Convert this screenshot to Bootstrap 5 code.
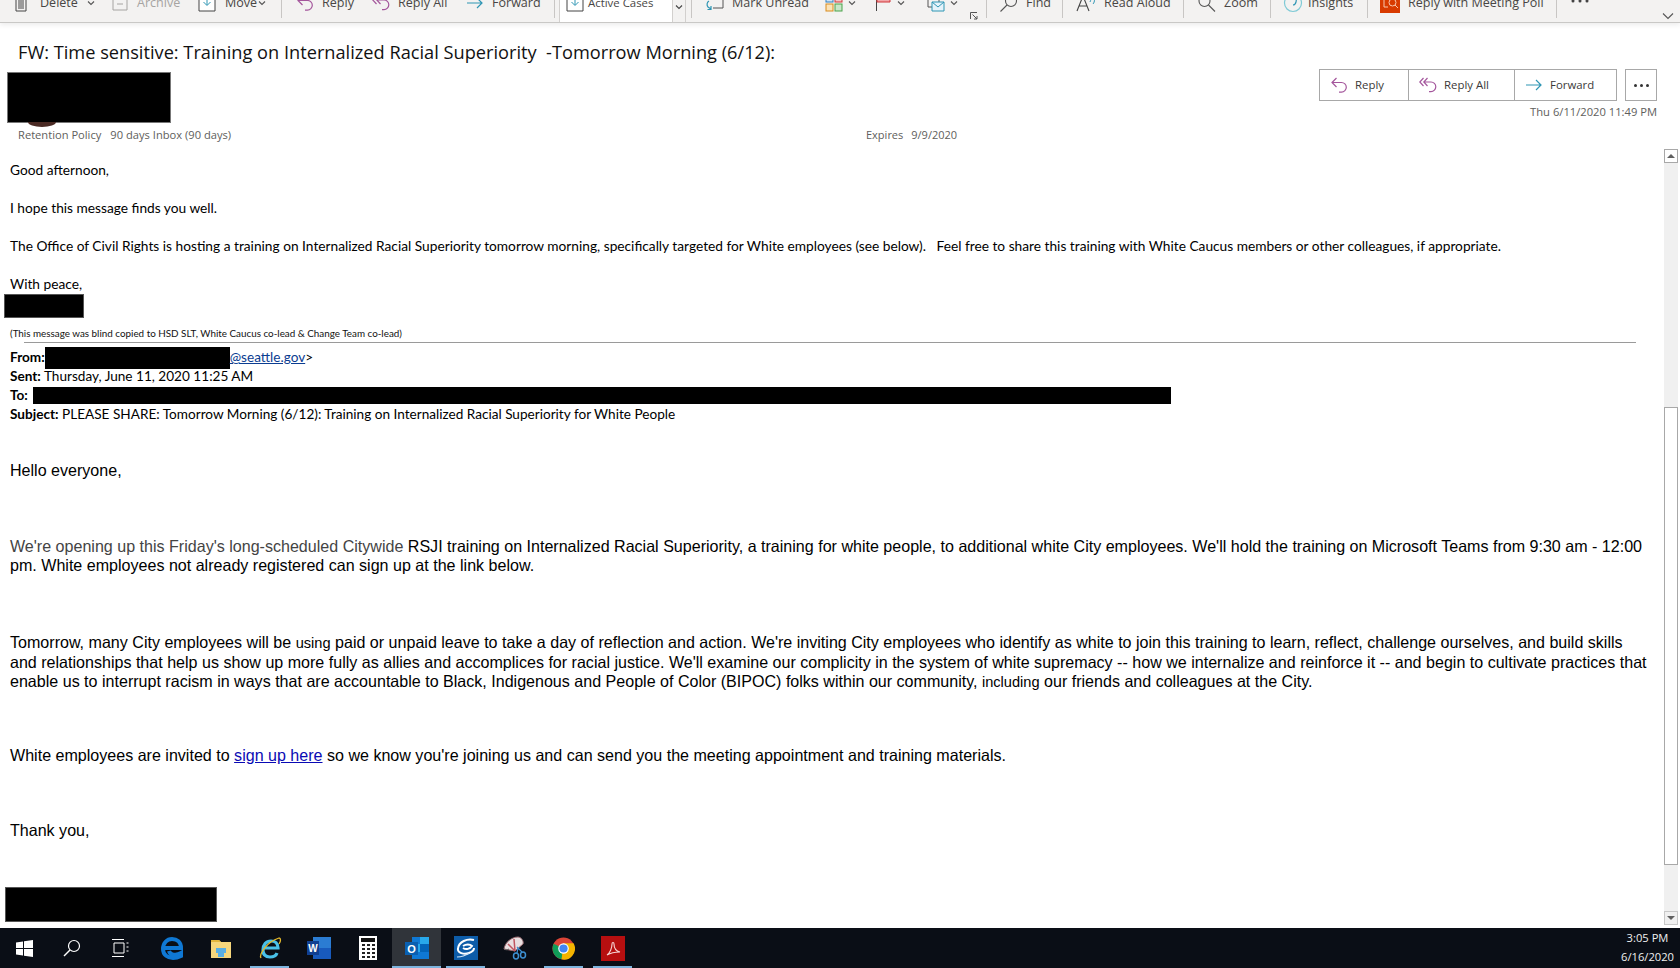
<!DOCTYPE html>
<html lang="en">
<head>
<meta charset="utf-8">
<title>Outlook message</title>
<link href="https://cdn.jsdelivr.net/npm/bootstrap@5.3.0/dist/css/bootstrap.min.css" rel="stylesheet">
<style>
html,body{height:968px;overflow:hidden;background:#fff;}
body{font-family:"Open Sans","Noto Sans",sans-serif;color:#000;}
.shell{height:968px;}
.ribbon{height:23px;background:#f3f2f1;border-bottom:1px solid #c9c8c6;box-shadow:0 2px 5px rgba(0,0,0,.08);overflow:hidden;flex:none;position:relative;z-index:2;}
.ribbon-row{display:grid;height:40px;margin-top:-17px;padding-left:13px;font-size:12.55px;color:#484644;
 grid-template-columns:99px 86px 83px 15px 76px 94px 88px 5px 132px 13px 121px 50px 52px 43px 16px 13px 63px 14px 107px 14px 73px 13px 84px 13px 176px 15px 91px 20px;}
.tool{display:flex;align-items:center;white-space:nowrap;gap:8px;}
.tool svg{flex:none;}
.gap-wide{gap:11px;}
.gap-mid{gap:9px;}
.gap-tight{gap:5px;}
.tool-off{color:#a6a4a2;}
.chev-a{margin-left:-2px;}
.chev-b{margin-left:-8px;}
.rule{width:1px;height:25px;background:#c8c6c4;align-self:start;margin-top:10px;}
.combo{display:flex;align-items:center;background:#fff;border:1px solid #d2d0ce;width:127px;height:40px;font-size:11.4px;padding-left:6px;gap:4px;}
.combo-arrow{margin-left:auto;width:13px;height:100%;background:#f3f2f1;border-left:1px solid #d2d0ce;display:flex;align-items:center;justify-content:center;padding-top:8px;}
.launcher{align-self:end;margin-bottom:3px;}
.head{flex:none;height:125px;}
.subject{font-size:18.22px;line-height:24px;padding:17px 0 0 18px;color:#111;white-space:pre;height:49px;}
.sender-row{height:55px;}
.who{width:164px;height:51px;margin-left:7px;background:#000;border:1px solid #777;position:relative;flex:none;}
.who::after{content:"";position:absolute;left:20px;top:49px;width:28px;height:5px;border-radius:0 0 50% 50%/0 0 100% 100%;background:#4a2a24;}
.acts{margin:-3px 23px 0 0;}
.act-group{display:flex;height:32px;border:1px solid #a8a8a8;font-size:11.4px;color:#3b3a39;}
.act{display:flex;align-items:center;gap:7px;padding-left:10px;border-right:1px solid #a8a8a8;}
.act:last-child{border-right:0;}
.act-a{width:89px;}
.act-b{width:106px;}
.act-c{width:101px;}
.act-more{width:32px;height:32px;border:1px solid #a8a8a8;margin-left:8px;display:flex;align-items:center;justify-content:center;gap:3px;}
.dotty{width:3px;height:3px;background:#333;border-radius:50%;}
.stamp{font-size:11.2px;color:#605e5c;text-align:right;line-height:16px;margin-top:3px;}
.meta{font-size:11px;color:#605e5c;line-height:16px;padding-left:18px;position:relative;white-space:nowrap;}
.meta-left{font-size:11.15px;}
.meta-gap{margin-left:9px;}
.meta-exp{position:absolute;left:866px;top:0;white-space:nowrap;}
.pane{flex:1 1 auto;min-height:0;overflow:hidden;}
.mail{flex:1 1 auto;min-width:0;padding:0 0 0 10px;font-family:Lato,"Open Sans",sans-serif;font-size:13.73px;line-height:19px;color:#000;}
.note{height:19px;}
.first{margin-top:12px;}
.spacer{height:19px;}
.black{background:#000;display:block;}
.bar-sign{width:80px;height:24px;margin:1px 0 0 -6px;border:1px solid #555;}
.tiny{font-size:9.85px;line-height:13px;margin-top:9px;color:#111;}
.divline{height:1px;background:#9a9a9a;margin:2px 14px 0 14px;width:1612px;}
.from-rows{margin-top:5px;font-size:13.6px;}
.from-row{height:19px;white-space:nowrap;display:flex;align-items:center;}
.from-row b{font-weight:700;}
.hide-a{width:185px;height:22px;}
.hide-b{width:1138px;height:17px;margin-left:5px;}
.mlink{color:#0b3d91;}
.sp-pre{white-space:pre;}
.arial{font-family:"Liberation Sans",Arial,sans-serif;font-size:16.07px;line-height:19px;width:1640px;}
.sect-a{margin-top:37px;}
.sect-b{margin-top:57px;}
.sect-c{margin-top:58px;}
.sect-d{margin-top:54px;}
.sect-e{margin-top:56px;}
.grey-run{color:#444;}
.shrink{font-size:14.6px;}
.signup{color:#0a0ab4;}
.bar-end{width:212px;height:35px;margin:47px 0 0 -5px;border:1px solid #555;}
.scroller{width:14px;flex:none;margin:1px 2px 3px 0;background:#f0f0f0;display:flex;flex-direction:column;}
.sc-btn{height:14px;flex:none;border:1px solid #a8a8a8;display:flex;align-items:center;justify-content:center;background:#fff;}
.sc-btn-low{border-color:#c8c8c8;background:#f0f0f0;}
.sc-thumb{height:458px;margin-top:244px;background:#fff;border:1px solid #a8a8a8;flex:none;}
.sc-fill{flex:1 1 auto;}
.tri-up{width:0;height:0;border-left:4px solid transparent;border-right:4px solid transparent;border-bottom:4px solid #606060;}
.tri-down{width:0;height:0;border-left:4px solid transparent;border-right:4px solid transparent;border-top:4px solid #606060;}
.taskbar{height:40px;background:#0a0e16;flex:none;color:#e8e8e8;}
.slot{width:48px;height:40px;display:flex;align-items:center;justify-content:center;position:relative;flex:none;}
.slot-app{width:49px;}
.slot-first{margin-left:3px;}
.slot-on::after{content:"";position:absolute;left:5px;right:5px;bottom:0;height:2px;background:#7db4de;}
.slot-focus{background:#30343a;}
.slot-focus::after{left:0;right:0;}
.clock{margin-left:auto;text-align:center;font-size:11.2px;line-height:19px;padding-right:6px;color:#f0f0f0;}
</style>
</head>
<body>
<svg width="0" height="0" class="d-block" aria-hidden="true">
 <defs>
  <symbol id="i-reply" viewBox="0 0 18 18"><path d="M6.5 2 2 6.5 6.5 11M2 6.5h9.5a4.8 4.8 0 0 1 0 9.6H9" fill="none" stroke="currentColor" stroke-width="1.2"/></symbol>
  <symbol id="i-replyall" viewBox="0 0 18 18"><path d="M4.5 2 .8 6l3.7 4M8.5 2 4.8 6l3.7 4M4.8 6h7.2a4.8 4.8 0 0 1 0 9.6h-2" fill="none" stroke="currentColor" stroke-width="1.2"/></symbol>
  <symbol id="i-forward" viewBox="0 0 18 18"><path d="M1 9h15M11 4l5 5-5 5" fill="none" stroke="currentColor" stroke-width="1.2"/></symbol>
  <symbol id="i-chev" viewBox="0 0 8 8"><path d="M1 2.5 4 5.5 7 2.5" fill="none" stroke="currentColor" stroke-width="1.1"/></symbol>
 </defs>
</svg>
<div class="shell d-flex flex-column">
 <div class="ribbon">
  <div class="ribbon-row">
   <div class="tool gap-wide"><svg width="16" height="18" viewBox="0 0 16 18"><path d="M1 4h14M3 4v13h10V4M6 6v9M8 6v9M10 6v9" fill="none" stroke="#444" stroke-width="1"/></svg>Delete<svg class="chev-a" width="8" height="8" color="#555"><use href="#i-chev"/></svg></div>
   <div class="tool tool-off gap-mid"><svg width="16" height="16" viewBox="0 0 16 16"><path d="M1 3h14v12H1zM5 9h6" fill="none" stroke="#a6a4a2"/></svg>Archive</div>
   <div class="tool gap-mid"><svg width="18" height="18" viewBox="0 0 18 18"><path d="M1 2h16v15H1z" fill="#fff" stroke="#444"/><path d="M9 2v9M5.500 8 9 11.500 12.500 8" fill="none" stroke="#2f96b4"/></svg><span>Move</span><svg class="chev-b" width="8" height="8" color="#555"><use href="#i-chev"/></svg></div>
   <div class="rule"></div>
   <div class="tool"><svg width="18" height="18" color="#a4569c"><use href="#i-reply"/></svg>Reply</div>
   <div class="tool"><svg width="18" height="18" color="#a4569c"><use href="#i-replyall"/></svg>Reply All</div>
   <div class="tool"><svg width="18" height="18" color="#2f96b4"><use href="#i-forward"/></svg>Forward</div>
   <div class="rule"></div>
   <div class="combo"><svg width="18" height="18" viewBox="0 0 18 18"><path d="M1 2h16v15H1z" fill="#fff" stroke="#444"/><path d="M9 2v9M5.500 8 9 11.500 12.500 8" fill="none" stroke="#2f96b4"/></svg>Active Cases<div class="combo-arrow"><svg width="8" height="8" color="#444"><use href="#i-chev"/></svg></div></div>
   <div class="rule"></div>
   <div class="tool"><svg width="20" height="20" viewBox="0 0 20 20"><path d="M8 4h11v11H9" fill="none" stroke="#555"/><path d="M5 8a4 4 0 0 0-1 6l3 2M7 13v3.500H3.500" fill="none" stroke="#2f96b4" stroke-width="1.200"/></svg>Mark Unread</div>
   <div class="tool gap-tight"><svg width="18" height="18" viewBox="0 0 18 18"><rect x="1" y="10" width="7" height="7" fill="#fbe3b8" stroke="#d98c1f"/><rect x="10" y="10" width="7" height="7" fill="#c9e6c9" stroke="#4ba34b"/><rect x="1" y="1" width="7" height="7" fill="#cfe4f7" stroke="#2f7fc1"/><rect x="10" y="1" width="7" height="7" fill="#f6c6c6" stroke="#d13438"/></svg><svg width="8" height="8" color="#555"><use href="#i-chev"/></svg></div>
   <div class="tool gap-tight"><svg width="17" height="18" viewBox="0 0 17 18"><path d="M1.500 2v15" stroke="#444" fill="none"/><path d="M2 1h13v7H2z" fill="#f1a7a9" stroke="#d13438"/></svg><svg width="8" height="8" color="#555"><use href="#i-chev"/></svg></div>
   <div class="tool gap-tight"><svg width="18" height="18" viewBox="0 0 18 18"><path d="M1 1h11v12H1z" fill="none" stroke="#555"/><path d="M5 8h12v9H5z" fill="#e5f3fa" stroke="#2f96b4"/><path d="M5 8l6 5 6-5" fill="none" stroke="#2f96b4"/></svg><svg width="8" height="8" color="#555"><use href="#i-chev"/></svg></div>
   <div class="tool launcher"><svg width="8" height="8" viewBox="0 0 8 8"><path d="M.5 7V.5H7M2.500 2.500 7 7M7 4v3H4" fill="none" stroke="#555"/></svg></div>
   <div class="rule"></div>
   <div class="tool"><svg width="19" height="19" viewBox="0 0 19 19"><circle cx="12" cy="7" r="5.500" fill="none" stroke="#555" stroke-width="1.100"/><path d="M8 11 1.500 17.500" stroke="#555" stroke-width="1.100"/></svg>Find</div>
   <div class="rule"></div>
   <div class="tool"><svg width="20" height="19" viewBox="0 0 20 19"><path d="M1 17 7 2l6 15M3.500 12h7" fill="none" stroke="#444" stroke-width="1.100"/><path d="M14 3c1 1 1 3 0 5M17 1c2 2 2 7 0 9" fill="none" stroke="#2f96b4"/></svg>Read Aloud</div>
   <div class="rule"></div>
   <div class="tool"><svg width="19" height="19" viewBox="0 0 19 19"><circle cx="7.500" cy="7" r="5.500" fill="none" stroke="#555" stroke-width="1.100"/><path d="M11.500 11 18 17.500" stroke="#555" stroke-width="1.100"/></svg>Zoom</div>
   <div class="rule"></div>
   <div class="tool gap-tight"><svg width="20" height="20" viewBox="0 0 20 20"><circle cx="10" cy="10" r="8.500" fill="none" stroke="#7fcad6" stroke-width="1.200"/><path d="M8 3c4-1 6 2 5 6-.5 2-2 3-3 3" fill="none" stroke="#2f96b4" stroke-width="1.200"/></svg>Insights</div>
   <div class="rule"></div>
   <div class="tool"><svg width="20" height="20" viewBox="0 0 20 20"><rect width="20" height="20" fill="#d83b01"/><path d="M4 5v9h4" fill="none" stroke="#f7c7ad"/><circle cx="12.500" cy="9.500" r="3.500" fill="none" stroke="#f7c7ad"/><path d="M15 12l3 3" stroke="#f7c7ad"/></svg>Reply with Meeting Poll</div>
   <div class="rule"></div>
   <div class="tool"><svg width="18" height="4" viewBox="0 0 18 4" class="mb-1"><circle cx="2" cy="2" r="1.500" fill="#444"/><circle cx="9" cy="2" r="1.500" fill="#444"/><circle cx="16" cy="2" r="1.500" fill="#444"/></svg></div>
   <div class="tool launcher"><svg width="12" height="8" viewBox="0 0 12 8" ><path d="M1 1.500 6 6.500 11 1.500" fill="none" stroke="#555" stroke-width="1.100"/></svg></div>
  </div>
 </div>

 <div class="head">
  <div class="subject">FW: Time sensitive: Training on Internalized Racial Superiority  -Tomorrow Morning (6/12):</div>
  <div class="sender-row d-flex justify-content-between align-items-start">
   <div class="who"></div>
   <div class="acts">
    <div class="d-flex">
     <div class="act-group">
      <div class="act act-a"><svg width="18" height="18" color="#a4569c"><use href="#i-reply"/></svg>Reply</div>
      <div class="act act-b"><svg width="18" height="18" color="#a4569c"><use href="#i-replyall"/></svg>Reply All</div>
      <div class="act act-c"><svg width="18" height="18" color="#2f96b4"><use href="#i-forward"/></svg>Forward</div>
     </div>
     <div class="act-more"><span class="dotty"></span><span class="dotty"></span><span class="dotty"></span></div>
    </div>
    <div class="stamp">Thu 6/11/2020 11:49 PM</div>
   </div>
  </div>
  <div class="meta"><span class="meta-left">Retention Policy</span><span class="meta-left meta-gap">90 days Inbox (90 days)</span><div class="meta-exp"><span>Expires</span><span class="ms-2">9/9/2020</span></div></div>
 </div>

 <div class="pane d-flex">
  <div class="mail">
   <div class="note first">Good afternoon,</div>
   <div class="spacer"></div>
   <div class="note">I hope this message finds you well.</div>
   <div class="spacer"></div>
   <div class="note sp-pre">The Office of Civil Rights is hosting a training on Internalized Racial Superiority tomorrow morning, specifically targeted for White employees (see below).   Feel free to share this training with White Caucus members or other colleagues, if appropriate.</div>
   <div class="spacer"></div>
   <div class="note">With peace,</div>
   <span class="black bar-sign"></span>
   <div class="tiny">(This message was blind copied to HSD SLT, White Caucus co-lead &amp; Change Team co-lead)</div>
   <div class="divline"></div>
   <div class="from-rows">
    <div class="from-row"><b>From:</b><span class="black hide-a"></span><span class="mlink text-decoration-underline">@seattle.gov</span>&gt;</div>
    <div class="from-row"><span><b>Sent:</b> Thursday, June 11, 2020 11:25 AM</span></div>
    <div class="from-row"><b>To:</b><span class="black hide-b"></span></div>
    <div class="from-row"><span><b>Subject:</b> PLEASE SHARE: Tomorrow Morning (6/12): Training on Internalized Racial Superiority for White People</span></div>
   </div>
   <div class="arial sect-a">Hello everyone,</div>
   <div class="arial sect-b"><span class="grey-run">We're opening up this Friday's long-scheduled Citywide </span>RSJI training on Internalized Racial Superiority, a training for white people, to additional white City employees. We'll hold the training on Microsoft Teams from 9:30 am - 12:00 pm. White employees not already registered can sign up at the link below.</div>
   <div class="arial sect-c">Tomorrow, many City employees will be <span class="shrink">using</span> paid or unpaid leave to take a day of reflection and action. We're inviting City employees who identify as white to join this training to learn, reflect, challenge ourselves, and build skills and relationships that help us show up more fully as allies and accomplices for racial justice. We'll examine our complicity in the system of white supremacy -- how we internalize and reinforce it -- and begin to cultivate practices that enable us to interrupt racism in ways that are accountable to Black, Indigenous and People of Color (BIPOC) folks within our community, <span class="shrink">including</span> our friends and colleagues at the City.</div>
   <div class="arial sect-d">White employees are invited to <a class="signup" href="#">sign up here</a> so we know you're joining us and can send you the meeting appointment and training materials.</div>
   <div class="arial sect-e">Thank you,</div>
   <span class="black bar-end"></span>
  </div>
  <div class="scroller">
   <div class="sc-btn"><span class="tri-up"></span></div>
   <div class="sc-thumb"></div>
   <div class="sc-fill"></div>
   <div class="sc-btn sc-btn-low"><span class="tri-down"></span></div>
  </div>
 </div>

 <div class="taskbar d-flex">
  <div class="slot"><svg width="17" height="17" viewBox="0 0 17 17"><path d="M0 2.500 7 1.500V8H0zM8 1.300 17 0V8H8zM0 9h7v6.500L0 14.500zM8 9h9v8l-9-1.300z" fill="#fff"/></svg></div>
  <div class="slot"><svg width="18" height="18" viewBox="0 0 18 18"><circle cx="11" cy="7" r="5.500" fill="none" stroke="#fff" stroke-width="1.200"/><path d="M7 11 1 17" stroke="#fff" stroke-width="1.400"/></svg></div>
  <div class="slot"><svg width="18" height="18" viewBox="0 0 18 18"><path d="M1 .5h12M1 17.500h12M3 4h10v10H3zM15.500 4h2M15.500 8h2M15.500 12h2" fill="none" stroke="#fff"/></svg></div>
  <div class="slot slot-app slot-first"><svg width="22" height="24" viewBox="0 0 22 24"><path d="M4 12h16C20 6 16 3 11 3 6 3 2 7 2 13c0 6 5 9 10 9 3 0 6-1 8-2v-3c-5 3-11 2-12-2" fill="none" stroke="#0f78d4" stroke-width="4"/></svg></div>
  <div class="slot slot-app"><svg width="22" height="22" viewBox="0 0 22 22"><path d="M1 3h8l2 2h10v16H1z" fill="#f6d67c"/><path d="M1 3h8l2 2H1z" fill="#e4b63d"/><path d="M6 11h10v5h-2v4H8v-4H6z" fill="#5aaee3"/></svg></div>
  <div class="slot slot-app slot-on"><svg width="24" height="24" viewBox="0 0 24 24"><path d="M5 12h15c0-5-3-7-7-7-5 0-8 4-8 9s3 7 7 7c3 0 6-1 7-4" fill="none" stroke="#49c0e8" stroke-width="3.200"/><path d="M3 22C1 19 8 6 21 2c2 0 2 3 0 6" fill="none" stroke="#e5b92c" stroke-width="1.300"/></svg></div>
  <div class="slot slot-app"><svg width="24" height="24" viewBox="0 0 24 24"><rect x="6" y="1" width="18" height="22" fill="#2b7cd3"/><rect x="6" y="12" width="18" height="11" fill="#185abd"/><rect y="5" width="12" height="14" fill="#103f91"/><text x="6" y="16" text-anchor="middle" font-size="10" font-weight="700" fill="#fff" font-family="Liberation Sans">W</text></svg></div>
  <div class="slot slot-app"><svg width="18" height="24" viewBox="0 0 18 24"><rect width="18" height="24" fill="#fff"/><rect x="2" y="2" width="14" height="4" fill="#111"/><path d="M3 9h3M8 9h3M13 9h3M3 13h3M8 13h3M13 13h3M3 17h3M8 17h3M13 17h3M3 21h3M8 21h3M13 21h3" stroke="#222" stroke-width="2"/></svg></div>
  <div class="slot slot-app slot-on slot-focus"><svg width="24" height="24" viewBox="0 0 24 24"><rect x="7" y="1" width="17" height="22" fill="#0f78d4"/><rect x="15" y="1" width="9" height="7" fill="#28a8ea"/><rect x="7" y="8" width="8" height="8" fill="#28a8ea"/><rect x="15" y="8" width="9" height="8" fill="#0364b8"/><rect y="6" width="13" height="13" fill="#0a5fb0"/><text x="6.500" y="16.500" text-anchor="middle" font-size="11" font-weight="700" fill="#fff" font-family="Liberation Sans">O</text></svg></div>
  <div class="slot slot-app slot-on"><svg width="24" height="24" viewBox="0 0 24 24"><rect width="24" height="24" fill="#0d5ca8"/><path d="M20 4C13 2 5 6 4 12c-1 5 6 7 11 5 3-1 5-3 5-5M9 10c3-2 7-2 9 0-2 3-6 4-9 2" fill="none" stroke="#fff" stroke-width="2"/><path d="M3 21c4 0 8-1 12-4" fill="none" stroke="#cfe4f7" stroke-width="1.200"/></svg></div>
  <div class="slot slot-app"><svg width="24" height="24" viewBox="0 0 24 24"><path d="M1 13C2 6 9 1 15 1c3 0 6 4 5 7L12 15z" fill="#e9dfe0" stroke="#9a6a70"/><path d="M5 8l7 7M11 3l1 12" stroke="#c05560" stroke-width="1.500"/><path d="M1 13c2 1 3 1 5 0" fill="none" stroke="#666"/><ellipse cx="13" cy="20" rx="2.500" ry="3" fill="none" stroke="#3d8fd1" stroke-width="1.500"/><ellipse cx="20" cy="19" rx="2.500" ry="3" fill="none" stroke="#3d8fd1" stroke-width="1.500"/><path d="M14 17l1-5M19 16l-5-5" stroke="#3d8fd1" stroke-width="1.200"/></svg></div>
  <div class="slot slot-app slot-on"><svg width="23" height="23" viewBox="0 0 24 24"><circle cx="12" cy="12" r="11.500" fill="#db4437"/><path d="M12 12 1.700 7A11.500 11.500 0 0 0 10 23.300z" fill="#0f9d58"/><path d="M12 6.500h10.500A11.500 11.500 0 0 1 10 23.300z" fill="#f4b400"/><circle cx="12" cy="12" r="5.500" fill="#fff"/><circle cx="12" cy="12" r="4.300" fill="#4285f4"/></svg></div>
  <div class="slot slot-app slot-on"><svg width="24" height="25" viewBox="0 0 24 25"><rect width="24" height="25" fill="#b70f10"/><path d="M6 19c3-2 5-7 5-11 0-2 2-2 2 0 0 4 2 7 6 8-3 0-8 0-13 3z" fill="none" stroke="#f6d5d5" stroke-width="1.100"/></svg></div>
  <div class="clock"><div>3:05 PM</div><div>6/16/2020</div></div>
 </div>
</div>
</body>
</html>
